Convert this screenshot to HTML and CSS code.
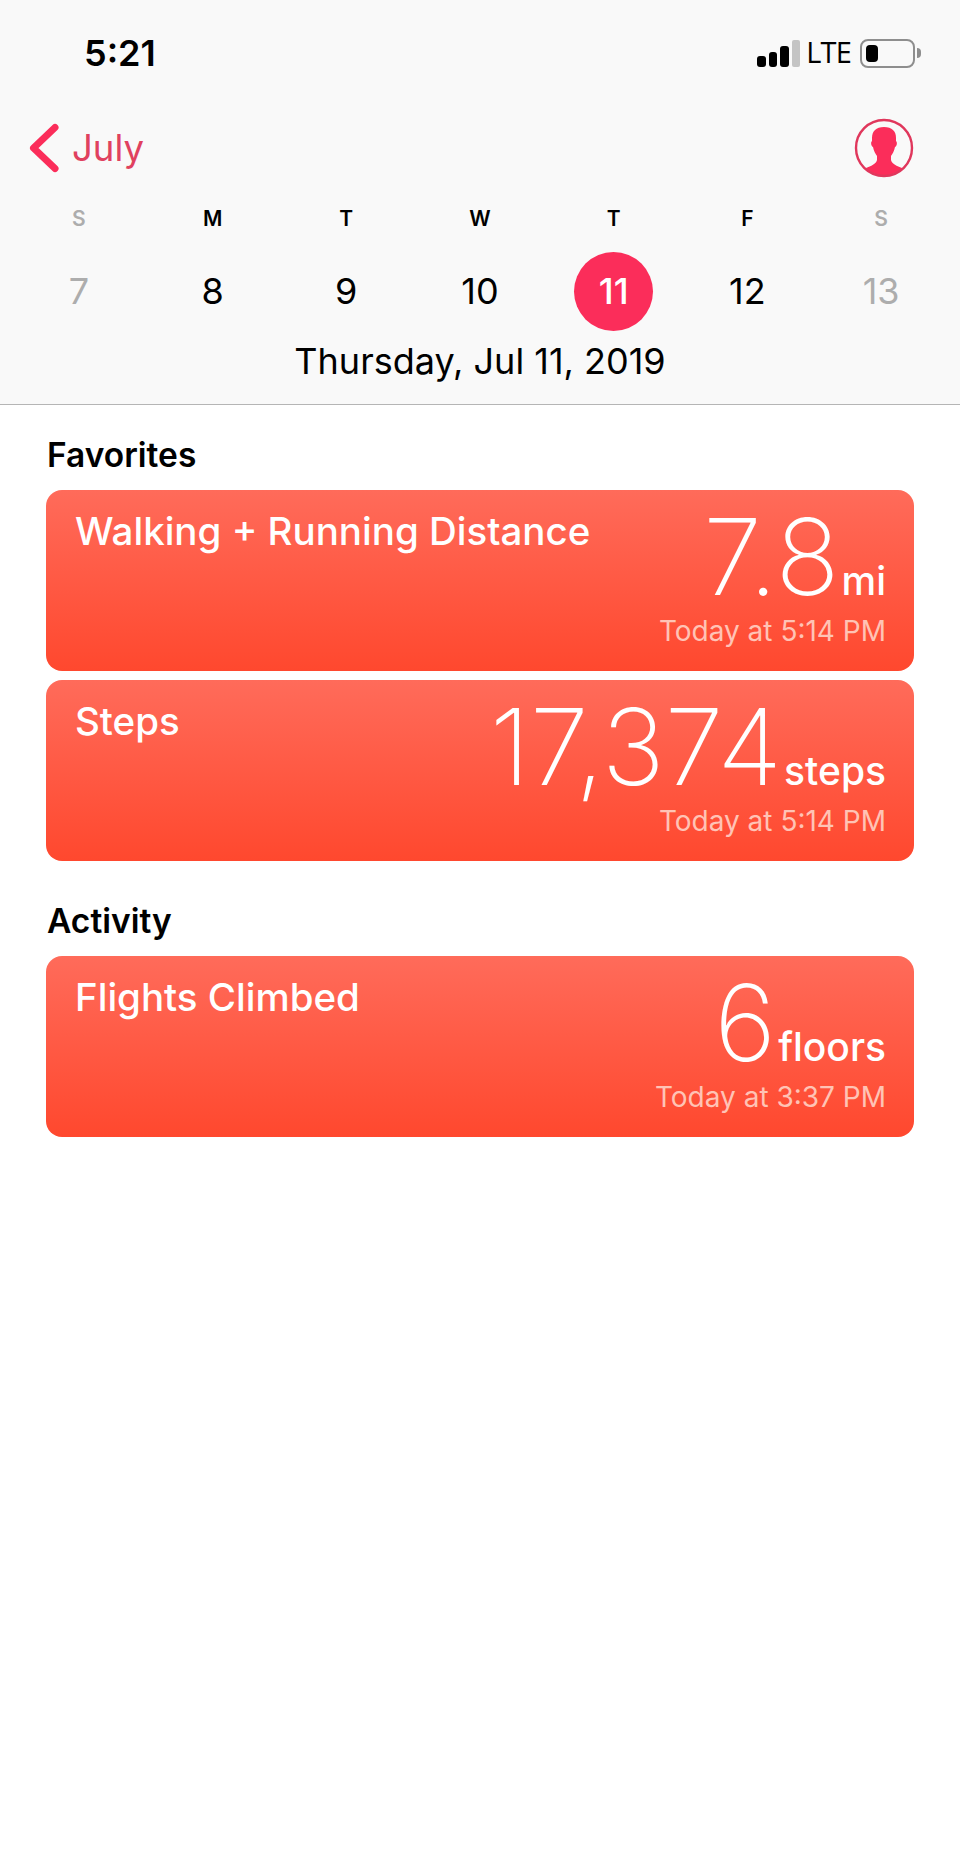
FILE: index.html
```html
<!DOCTYPE html>
<html lang="en">
  <head>
    <meta charset="UTF-8" />
    <meta name="viewport" content="width=device-width, initial-scale=1.0" />
    <title>Health - Summary</title>
    <link rel="stylesheet" href="styles.css">
  </head>
  <body>
    <header class="top">
      <div class="status">
        <span class="time">5:21</span>
        <div class="status-right">
          <div class="signal">
            <i class="bar bar1"></i>
            <i class="bar bar2"></i>
            <i class="bar bar3"></i>
            <i class="bar bar4"></i>
          </div>
          <span class="lte">LTE</span>
          <div class="battery"><i class="battery-fill"></i></div>
          <i class="battery-tip"></i>
        </div>
      </div>

      <div class="nav">
        <a class="back">
          <svg class="chevron" width="30" height="50" viewBox="0 0 30 50">
            <path d="M26 4.5 L4.5 25 L26 45.5" fill="none" stroke="#fb2d5a" stroke-width="7" stroke-linecap="round" stroke-linejoin="round" />
          </svg>
          <span>July</span>
        </a>
        <svg class="avatar" width="60" height="60" viewBox="0 0 60 60">
          <defs>
            <clipPath id="avatar-clip"><circle cx="30" cy="30" r="27.5" /></clipPath>
          </defs>
          <g clip-path="url(#avatar-clip)">
            <path fill="#fb2d5a" d="M30 9 C38 9 42 13 42 20 L42 23 C43.5 24 43 28 41 29 C40.3 33 38.5 36 37 38 L37 42 C38 46 43 48 48 50 C52 52 54 54 55 60 L5 60 C6 54 8 52 12 50 C17 48 22 46 23 42 L23 38 C21.5 36 19.7 33 19 29 C17 28 16.5 24 18 23 L18 20 C18 13 22 9 30 9 Z" />
          </g>
          <circle cx="30" cy="30" r="28" fill="none" stroke="#e0375c" stroke-width="2.4" />
        </svg>
      </div>

      <div class="week">
        <span class="wd off">S</span>
        <span class="wd">M</span>
        <span class="wd">T</span>
        <span class="wd">W</span>
        <span class="wd">T</span>
        <span class="wd">F</span>
        <span class="wd off">S</span>

        <span class="day off">7</span>
        <span class="day">8</span>
        <span class="day">9</span>
        <span class="day">10</span>
        <span class="day today">11</span>
        <span class="day">12</span>
        <span class="day off">13</span>
      </div>

      <p class="date">Thursday, Jul 11, 2019</p>
    </header>

    <main class="content">
      <h2 class="section-title">Favorites</h2>
      <div class="card">
        <div class="card-name">Walking + Running Distance</div>
        <div class="card-side">
          <div class="reading"><span class="num">7.8</span><span class="unit">mi</span></div>
          <div class="stamp">Today at 5:14 PM</div>
        </div>
      </div>
      <div class="card">
        <div class="card-name">Steps</div>
        <div class="card-side">
          <div class="reading"><span class="num">17,374</span><span class="unit">steps</span></div>
          <div class="stamp">Today at 5:14 PM</div>
        </div>
      </div>

      <h2 class="section-title">Activity</h2>
      <div class="card">
        <div class="card-name">Flights Climbed</div>
        <div class="card-side">
          <div class="reading"><span class="num">6</span><span class="unit">floors</span></div>
          <div class="stamp">Today at 3:37 PM</div>
        </div>
      </div>
    </main>
  </body>
</html>
```

FILE: styles.css
```css
* {
  margin: 0;
  padding: 0;
  box-sizing: border-box;
}

body {
  background: #fff;
  font-family: Inter, "Liberation Sans", sans-serif;
  color: #000;
  height: 1873px;
}

.top {
  height: 405px;
  background: #f9f9f9;
  border-bottom: 1px solid #b5b5b5;
}

.status {
  height: 106px;
  padding: 34px 39px 0 84px;
  display: flex;
  justify-content: space-between;
}

.time {
  font-size: 36px;
  font-weight: 600;
  line-height: 38px;
}

.status-right {
  display: flex;
  align-items: flex-end;
  height: 33px;
}

.signal {
  display: flex;
  align-items: flex-end;
  gap: 3px;
}

.bar {
  width: 8.5px;
  background: #000;
  border-radius: 3px;
}

.bar1 { height: 11px; }
.bar2 { height: 15px; }
.bar3 { height: 21px; }
.bar4 { height: 27px; background: #c4c4c4; border-radius: 2px; }

.lte {
  font-family: "Open Sans", sans-serif;
  font-size: 29px;
  line-height: 30px;
  margin-left: 6px;
  letter-spacing: -0.8px;
}

.battery {
  width: 55px;
  height: 29px;
  margin-left: 9px;
  border: 2px solid #8e8e8e;
  border-radius: 8px;
  padding: 4px;
  margin-bottom: -1px;
}

.battery-fill {
  display: block;
  width: 12px;
  height: 100%;
  background: #000;
  border-radius: 4px;
}

.battery-tip {
  width: 4px;
  height: 10px;
  background: #8e8e8e;
  border-radius: 0 4px 4px 0;
  margin: 0 0 9px 2px;
}

.nav {
  height: 96px;
  padding: 12px 46px 0 29px;
  display: flex;
  justify-content: space-between;
  align-items: flex-start;
}

.back {
  display: flex;
  align-items: center;
  gap: 13px;
  color: #e0415f;
  font-size: 36.5px;
  height: 60px;
}

.week {
  padding: 0 12px;
  display: grid;
  grid-template-columns: repeat(7, 1fr);
  grid-template-rows: 32px 114px;
  justify-items: center;
  align-items: center;
}

.wd {
  font-size: 21px;
  font-weight: 600;
}

.day {
  width: 79px;
  height: 79px;
  border-radius: 50%;
  display: flex;
  align-items: center;
  justify-content: center;
  font-size: 36px;
}

.off {
  color: #adadad;
}

.today {
  background: #fb2d5a;
  color: #fff;
  font-weight: 500;
}

.date {
  text-align: center;
  font-size: 36px;
  line-height: 40px;
  margin-top: -7px;
}

.content {
  padding: 0 46px;
}

.section-title {
  font-size: 33.5px;
  font-weight: 600;
  line-height: 40px;
  padding: 30px 0 0 1px;
  height: 85px;
}

.card + .section-title {
  height: 86px;
  padding-top: 31px;
}

.card {
  height: 181px;
  margin-bottom: 9px;
  border-radius: 16px;
  background: linear-gradient(#ff6b5a, #ff482e);
  color: #fff;
  padding: 19px 28px 0 29px;
  display: flex;
  justify-content: space-between;
}

.card-name {
  font-size: 38.5px;
  font-weight: 500;
  line-height: 44px;
}

.card-side {
  text-align: right;
}

.reading {
  display: flex;
  justify-content: flex-end;
  align-items: baseline;
  height: 102px;
  margin-top: -3px;
}

.num {
  font-size: 106px;
  font-weight: 200;
  line-height: 102px;
}

.unit {
  font-size: 39px;
  font-weight: 500;
  margin-left: 2px;
}

.stamp {
  font-size: 28px;
  line-height: 34px;
  margin-top: 6px;
  color: #ffc3b5;
}
```
